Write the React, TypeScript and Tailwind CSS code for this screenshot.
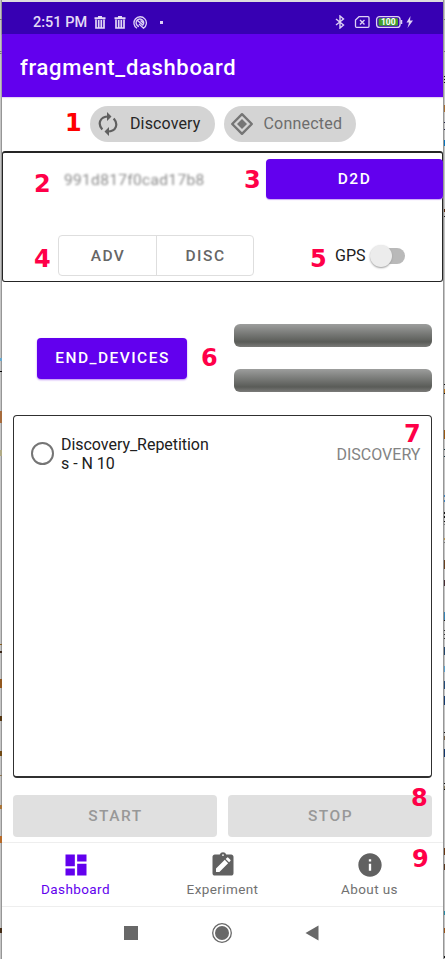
import type { ReactNode } from "react";

function Trash() {
  return (
    <svg width="12" height="13" viewBox="0 0 12 13" fill="none" stroke="#e4daf6" className="shrink-0">
      <path d="M0.5 2.3H11.5M4 1h4" strokeWidth="2" />
      <path d="M2 3.5V12H10V3.5M4.7 4v7.5M7.3 4v7.5" strokeWidth="1.7" />
    </svg>
  );
}

function Swirl() {
  return (
    <svg width="14" height="14" viewBox="0 0 14 14" fill="none" stroke="#ddd0f5" className="shrink-0">
      <path d="M4 12.300A6.200 6.200 0 1 1 10.500 12.200L6 8" strokeWidth="1.300" />
      <path d="M10.300 8.500A3.800 3.800 0 1 0 6 10.500M4.500 4.500L10.300 9.500M7.500 4.500L10.300 7" strokeWidth="1.400" />
    </svg>
  );
}

function StatusBar() {
  return (
    <div className="flex h-8 shrink-0 items-center bg-[#3700b3] pt-[9px] text-[#e4daf6]">
      <span className="ml-[31px] w-[54px] whitespace-nowrap text-[14.5px] font-medium leading-[18px]">
        2:51 PM
      </span>
      <div className="ml-[7px] flex w-[69px] items-center">
        <Trash />
        <span className="w-2" />
        <Trash />
        <span className="w-2" />
        <Swirl />
        <span className="ml-[13px] size-[3px] shrink-0 bg-[#ddd0f5]" />
      </div>
      <svg width="82" height="14" viewBox="0 0 82 14" fill="none" stroke="#ddd0f5" className="-mt-px ml-[169px] shrink-0">
        <path d="M4 4L11.5 10L8 13V1L11.500 4L4 10" strokeWidth="1.4" />
        <path d="M27 1.7H36Q37 1.700 37 2.700V11.300Q37 12.300 36 12.300H24.500Q23.500 12.300 23.500 11.300V5Z" strokeWidth="1.300" />
        <path d="M28 5L32.500 9.500M32.500 5L28 9.500" strokeWidth="1.400" />
        <rect x="44.600" y="1.600" width="23.500" height="10.800" rx="3" strokeWidth="1.300" />
        <rect x="46.500" y="3.300" width="19.500" height="7.500" rx="1" fill="#43a02c" stroke="none" />
        <path d="M69.500 5v4" strokeWidth="1.500" />
        <text x="56.300" y="10" textAnchor="middle" fontSize="8.500" fontWeight="700" fill="#fff" stroke="none" fontFamily="Roboto, sans-serif">100</text>
        <path d="M78.500 1L74.500 7.500H77L75.500 13L81 5.500H78Z" fill="#ddd0f5" stroke="none" />
      </svg>
    </div>
  );
}

function Chip({ className, children }: { className: string; children: ReactNode }) {
  return (
    <div className={`flex h-9 items-center rounded-full bg-[#d4d4d4] text-[16px] ${className}`}>{children}</div>
  );
}

function Badge({ n, className }: { n: string; className: string }) {
  return (
    <span className={`absolute font-['DejaVu_Sans'] text-[24px] font-bold leading-[28px] ${className}`}>{n}</span>
  );
}

function Meter() {
  return (
    <div className="h-[23px] rounded-[6px] bg-linear-to-b from-[#9d9e9d] via-[#5a5c58] via-78% to-[#7b7b79]" />
  );
}

const leftMarks: [number, number, string][] = [
  [19, 1, "#777"], [51, 1, "#777"], [53, 1, "#777"], [358, 3, "#67a9cf"], [371, 1, "#000"], [411, 12, "#a66b3c"],
  [450, 6, "#b0aa85"], [644, 1, "#855c20"], [651, 2, "#3b2818"], [679, 9, "#92571e"], [716, 5, "#543511"],
  [751, 5, "#704914"], [775, 1, "#8b7553"], [805, 4, "#a87438"], [836, 7, "#b76a28"], [928, 5, "#432c16"],
];

const rightMarks: [number, number, string][] = [
  [19, 1, "#777"], [51, 1, "#777"], [76, 1, "#111"], [79, 1, "#111"], [82, 1, "#111"], [105, 7, "#a86d31"],
  [122, 1, "#224"], [129, 1, "#224"], [140, 6, "#0875be"], [209, 3, "#56260b"], [216, 1, "#222"],
  [384, 1, "#111"], [389, 4, "#b87722"], [393, 1, "#111"], [430, 9, "#995811"], [449, 1, "#16323d"], [456, 1, "#16323d"],
  [495, 2, "#3d83bf"], [500, 2, "#3d83bf"], [512, 2, "#111"], [516, 2, "#111"], [521, 1, "#111"], [524, 1, "#777"],
  [538, 2, "#b79552"], [542, 1, "#777"], [560, 9, "#684020"], [580, 6, "#482d34"], [612, 8, "#3785b8"], [620, 1, "#111"],
  [630, 1, "#333"], [634, 1, "#333"], [638, 1, "#333"], [647, 8, "#23466b"], [666, 6, "#58a1cf"], [681, 8, "#214a79"],
  [696, 9, "#143b70"], [732, 1, "#111"], [736, 4, "#776044"], [749, 8, "#12366d"], [783, 1, "#111"], [786, 3, "#877c60"],
  [789, 1, "#111"], [848, 7, "#693611"], [864, 6, "#59371d"], [911, 4, "#2689a5"], [928, 5, "#995217"], [956, 2, "#111"],
];

/* A two pixel sliver of the window behind the phone screen. */
function Edge({ marks, right }: { marks: [number, number, string][]; right?: boolean }) {
  return (
    <svg width="2" height="959" className="shrink-0" shapeRendering="crispEdges">
      <rect width="2" height="959" fill="#c5c5c5" />
      <rect x={right ? 0 : 1} width="1" height="959" fill="#969696" />
      {marks.map(([y, h, color]) => (
        <rect key={y} x={right ? 1 : 0} y={y} width={right ? 1 : 2} height={h} fill={color} />
      ))}
    </svg>
  );
}

export default function App() {
  return (
    <div className="relative flex h-[959px] w-[445px] overflow-hidden bg-white font-[Roboto,sans-serif] text-[#202020]">
      <Edge marks={leftMarks} />
      <main className="flex w-[441px] flex-col border-t-2 border-[#dedede]">
        <StatusBar />
        <header className="flex h-[63px] shrink-0 items-center bg-[#6200ee] pl-[18px] pt-[3px] text-[22px] font-medium tracking-[0.67px] text-white shadow-[0_1px_1px_#e4d5f4]">
          fragment_dashboard
        </header>

        <div className="mt-[9px] flex h-9 shrink-0 gap-[8.5px] pl-[88px]">
          <Chip className="w-[125px] text-[#262626]">
            <svg width="20" height="24" viewBox="0 0 20 24" fill="none" stroke="#5f5f5f" strokeWidth="2.2" className="ml-2 mr-3">
              <path d="M4.300 17.500C-0.500 12 1.600 4.500 10.500 4.500M15.700 6.500C20.500 12 18.400 19.500 9.500 19.500" />
              <path d="M9 0L13.500 4.500L9 9ZM11 15L6.500 19.500L11 24Z" fill="#5f5f5f" stroke="none" />
            </svg>
            <span className="tracking-[0.12px]">Discovery</span>
          </Chip>
          <Chip className="w-[132px] text-[#6d6d6d]">
            <svg width="24" height="24" viewBox="0 0 24 24" className="ml-1.5 mr-[10px]">
              <path d="M12 2.200L21.800 12L12 21.800L2.200 12Z" fill="none" stroke="#757575" strokeWidth="2.400" strokeLinejoin="round" />
              <path d="M12 7L17 12L12 17L7 12Z" fill="#757575" />
            </svg>
            <span className="tracking-[0.2px]">Connected</span>
          </Chip>
        </div>

        <section className="mt-[9px] h-[131px] shrink-0 rounded-[3px] border-x border-b border-t-2 border-[#252525]">
          <div className="flex h-[46px] pt-[6px]">
            <span className="ml-[61px] mt-[11px] h-5 w-[202px] whitespace-nowrap text-[15.500px] leading-5 tracking-[0.330px] text-[#8c8c8c] blur-[1px]">
              991d817f0cad17b8
            </span>
            <button className="-mr-px h-[40px] flex-1 rounded-[4px] bg-[#6200ee] pt-[2px] text-[15.500px] font-medium tracking-[1.500px] text-white shadow-[0_1px_1px_#c9a6f4]">
              D2D
            </button>
          </div>
          <div className="mt-[36px] flex items-center">
            <div className="ml-[55px] flex h-[41px] w-[196px] rounded-[4px] border border-[#dedede] text-[15.500px] font-medium tracking-[1.500px] text-[#666]">
              <button className="w-[98px] border-r border-[#dedede] pl-px pt-[2px]">ADV</button>
              <button className="flex-1 pl-px pt-[2px]">DISC</button>
            </div>
            <span className="ml-[81px] pt-px text-[16px]">GPS</span>
            <div className="ml-[4px] flex h-6 w-[36px] items-center">
              <div className="z-10 size-[22px] shrink-0 rounded-full bg-[#ececec] shadow-[0_1px_2px_#999]" />
              <div className="-ml-[18px] h-4 w-[31px] shrink-0 rounded-full bg-[#b9b9b9]" />
            </div>
          </div>
        </section>

        <section className="mt-[42px] flex h-[68px] shrink-0 items-center pl-[35px]">
          <button className="h-[41px] w-[150px] whitespace-nowrap rounded-[4px] bg-[#6200ee] pl-px pt-[2px] text-[15.500px] font-medium tracking-[1.470px] text-white shadow-[0_1px_2px_#b98af2]">
            END_DEVICES
          </button>
          <div className="ml-[47px] flex w-[198px] flex-col gap-[22px]">
            <Meter />
            <Meter />
          </div>
        </section>

        <section className="ml-[11px] mt-[23px] h-[363px] w-[419px] shrink-0 rounded-[4px] border-[1.500px] border-b-2 border-[#303030] pl-[17px] pt-[19px]">
          <div className="flex items-start">
            <span className="mt-[7px] size-[23px] rounded-full border-2 border-[#757575]" />
            <p className="ml-[7px] w-[150px] text-[16px] leading-[19px] tracking-[-0.040px]">
              Discovery_Repetition
              <br />s - N 10
            </p>
            <span className="ml-[125.500px] mt-[10px] text-[16px] leading-[19px] text-[#838383]">DISCOVERY</span>
          </div>
        </section>

        <div className="mt-[17px] flex shrink-0 gap-[11px] pl-[11px] text-[15.500px] font-medium tracking-[1.500px] text-[#989898]">
          <button className="h-[42px] w-[204px] rounded-[4px] bg-[#e0e0e0] pl-px pt-[2px]">START</button>
          <button className="h-[42px] w-[204px] rounded-[4px] bg-[#e0e0e0] pl-px pt-[2px]">STOP</button>
        </div>

        <nav className="mt-[5px] grid h-[64px] shrink-0 grid-cols-3 border-t border-[#eeeeee] text-[13.500px] leading-[18px] tracking-[0.400px] text-[#717171]">
          <div className="flex flex-col items-center gap-px pt-[8px] text-[#6200ee]">
            <svg width="28" height="28" viewBox="0 0 24 24" fill="currentColor">
              <path d="M3 13h8V3H3v10zm0 8h8v-6H3v6zm10 0h8V11h-8v10zm0-18v6h8V3h-8z" />
            </svg>
            Dashboard
          </div>
          <div className="flex flex-col items-center gap-px pt-[8px]">
            <svg width="28" height="28" viewBox="0 0 24 24" fill="#616161">
              <path fillRule="evenodd" d="M19 3h-4.200a3 3 0 0 0-5.600 0H5c-1.100 0-2 .9-2 2v14c0 1.100.9 2 2 2h14c1.100 0 2-.9 2-2V5c0-1.100-.9-2-2-2zM12 2.700a.8.8 0 1 1 0 1.600.8.8 0 0 1 0-1.600z" />
              <path d="M6 18v-2.900l7.500-7.500 2.900 2.900L8.900 18zM14.300 6.800l1.100-1.100q.6-.6 1.200 0l1.700 1.700q.6.600 0 1.200l-1.100 1.100z" fill="#fff" />
            </svg>
            Experiment
          </div>
          <div className="flex flex-col items-center gap-px pt-[8px]">
            <svg width="28" height="28" viewBox="0 0 24 24" fill="#616161">
              <path d="M12 2C6.480 2 2 6.480 2 12s4.480 10 10 10 10-4.480 10-10S17.520 2 12 2zm1 15h-2v-6h2v6zm0-8h-2V7h2v2z" />
            </svg>
            About us
          </div>
        </nav>

        <div className="flex h-[53px] shrink-0 items-center border-t border-[#eeeeee]">
          <span className="ml-[122px] size-[14px] bg-[#686868]" />
          <svg width="22" height="22" viewBox="0 0 22 22" className="ml-[73px]">
            <circle cx="11" cy="11" r="9.300" fill="none" stroke="#686868" strokeWidth="1.300" />
            <circle cx="11" cy="11" r="7" fill="#686868" />
          </svg>
          <svg width="14" height="16" viewBox="0 0 14 16" className="ml-[72px]">
            <path d="M0.500 8L13.500 0.500V15.500Z" fill="#686868" />
          </svg>
        </div>
      </main>
      <Edge marks={rightMarks} right />

      <Badge n="1" className="left-[65px] top-[109px] text-[#ff0000]" />
      <Badge n="2" className="left-[34px] top-[170px] text-[#ff0048]" />
      <Badge n="3" className="left-[244px] top-[166px] text-[#ff0048]" />
      <Badge n="4" className="left-[34px] top-[245px] text-[#ff0048]" />
      <Badge n="5" className="left-[310px] top-[245px] text-[#ff0048]" />
      <Badge n="6" className="left-[201px] top-[344px] text-[#ff0048]" />
      <Badge n="7" className="left-[404px] top-[420px] text-[#ff0048]" />
      <Badge n="8" className="left-[411px] top-[784px] text-[#ff0048]" />
      <Badge n="9" className="left-[412px] top-[845px] text-[#ff0048]" />
    </div>
  );
}
